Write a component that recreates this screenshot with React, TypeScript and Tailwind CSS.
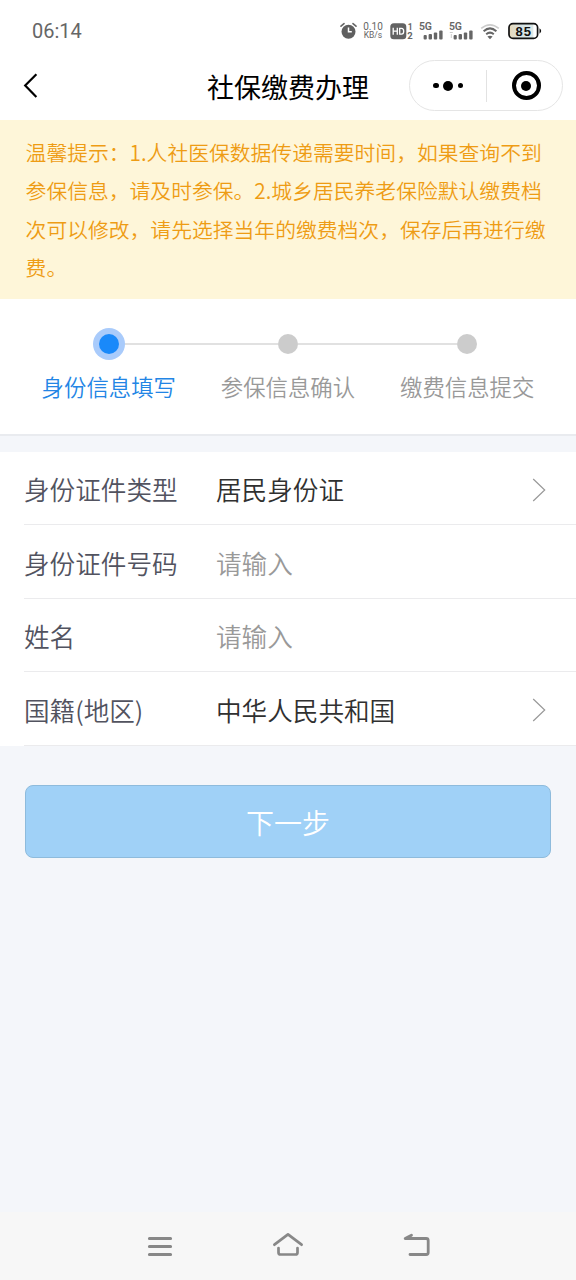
import React from "react";

const NOTICE = [
  "温馨提示：1.人社医保数据传递需要时间，如果查询不到",
  "参保信息，请及时参保。2.城乡居民养老保险默认缴费档",
  "次可以修改，请先选择当年的缴费档次，保存后再进行缴",
  "费。",
];

const STEPS = ["身份信息填写", "参保信息确认", "缴费信息提交"];

type Field = { label: string; value?: string; select?: boolean };

const FIELDS: Field[] = [
  { label: "身份证件类型", value: "居民身份证", select: true },
  { label: "身份证件号码" },
  { label: "姓名" },
  { label: "国籍(地区)", value: "中华人民共和国", select: true },
];

function Signal({ weak }: { weak?: boolean }) {
  return (
    <svg width="25" height="20" viewBox="0 0 25 20" fill="#666" className="shrink-0">
      <text x="0" y="9.2" fontSize="10.5" fontWeight="600" fontFamily="Roboto, sans-serif" textLength="13">5G</text>
      {weak && <path d="M0.8 11h3v1h-3zM1.8 13h1v4h-1z" fill="#ccc" />}
      <rect x="4.6" y="14" width="3.2" height="4.6" rx="1" />
      <rect x="9.6" y="13" width="3.4" height="5.6" rx="1" />
      <rect x="14.8" y="11.5" width="3.4" height="7.1" rx="1" />
      <rect x="20.2" y="9.5" width="3.4" height="9.1" rx="1" />
    </svg>
  );
}

function StatusBar() {
  return (
    <div className="flex h-[60px] items-center justify-between pr-[33.5px] pl-[32px] pt-[2px] font-normal text-[#666]">
      <span className="font-[Roboto,sans-serif] text-[20px] leading-none">06:14</span>
      <div className="flex items-center">
        <svg width="17" height="18" viewBox="0 0 17 18" className="mr-[6px]">
          <circle cx="8.5" cy="9.8" r="7" fill="#5f5f5f" />
          <path d="M1 4.2 4 1.6M16 4.2 13 1.6" stroke="#666" strokeWidth="1.6" strokeLinecap="round" />
          <path d="M8.5 5.5v4.3h3.3" stroke="#fff" strokeWidth="1.5" fill="none" />
        </svg>
        <div className="mr-[6px] flex w-[21px] flex-col items-center font-[Roboto,sans-serif] whitespace-nowrap">
          <span className="text-[10px] leading-[9px]">0.10</span>
          <span className="text-[8.5px] leading-[9px]">KB/s</span>
        </div>
        <svg width="24" height="18" viewBox="0 0 24 18" fill="#666" className="mr-[5px]">
          <rect x="0.3" y="1.3" width="16" height="16" rx="3.5" fill="#626262" />
          <path d="M3.2 5.8v7M7.3 5.8v7M3.2 9.2h4.1M9.7 6.4h1.8q2.2 0 2.2 2.9t-2.2 2.9H9.7z" fill="none" stroke="#fff" strokeWidth="1.3" />
          <text x="17.8" y="8" fontSize="8.5" fontWeight="700" fontFamily="Roboto, sans-serif">1</text>
          <text x="17.2" y="17" fontSize="9.5" fontWeight="700" fontFamily="Roboto, sans-serif">2</text>
        </svg>
        <Signal />
        <span className="w-[5px]" />
        <Signal weak />
        <svg width="20" height="18" viewBox="0 0 20 18" fill="none" strokeWidth="2" className="ml-[6px]">
          <path d="M1.2 6.4Q10 -0.8 18.8 6.4" stroke="#ccc" strokeWidth="1.6" />
          <path d="M3.6 9.2Q10 3.6 16.4 9.2" stroke="#666" />
          <path d="M6.2 12.2Q10 9 13.8 12.2" stroke="#666" />
          <path d="M7.4 14.4Q10 13 12.6 14.4L10 17.2z" fill="#666" />
        </svg>
        <svg width="35" height="18" viewBox="0 0 35 18" className="ml-[8px]">
          <defs>
            <linearGradient id="charge">
              <stop offset="0" stopColor="#e8d9b8" />
              <stop offset="0.45" stopColor="#d5e3e6" />
              <stop offset="0.85" stopColor="#dde9e8" />
              <stop offset="0.86" stopColor="#fff" />
            </linearGradient>
          </defs>
          <rect x="1" y="1.6" width="28.6" height="14.8" rx="4" fill="url(#charge)" stroke="#111" strokeWidth="1.7" />
          <path d="M31.5 6.3q3.4 2.7 0 5.4z" fill="#111" />
          <text x="15.2" y="13.7" textAnchor="middle" fontSize="13" fontWeight="700" fill="#111" fontFamily="Liberation Sans, sans-serif" textLength="15.5">85</text>
        </svg>
      </div>
    </div>
  );
}

function NavBar() {
  return (
    <div className="grid h-[60px] grid-cols-[1fr_auto_1fr] items-center pr-[13px] pl-[23px]">
      <svg width="16" height="26" viewBox="0 0 16 26" fill="none" stroke="#000" strokeWidth="2.2" className="-mt-[8px]">
        <path d="M13.4 1.3 2.2 12.5l11.2 11.4" />
      </svg>
      <h1 className="-mt-[7px] -ml-[10px] text-[27px] leading-[36px] font-normal text-black">社保缴费办理</h1>
      <div className="-mt-[9px] flex h-[51px] w-[154px] items-center justify-self-end rounded-full border border-[#e5e5e5]">
        <div className="flex w-[76px] items-center justify-center gap-[4.5px]">
          <i className="size-[5.5px] rounded-full bg-black" />
          <i className="size-[10px] rounded-full bg-black" />
          <i className="size-[5.5px] rounded-full bg-black" />
        </div>
        <div className="h-[32px] w-px bg-[#e2e2e2]" />
        <div className="flex flex-1 justify-center pl-[3px]">
          <div className="flex size-[29px] items-center justify-center rounded-full border-[4px] border-black">
            <i className="size-[10px] rounded-full bg-black" />
          </div>
        </div>
      </div>
    </div>
  );
}

function Stepper() {
  return (
    <div className="h-[137px] border-b-2 border-[#e9ebef] bg-white px-[19.2px] pt-[29px]">
      <div className="flex h-[32px] items-center pl-[73.6px]">
        <i className="flex size-[32px] items-center justify-center rounded-full bg-[#a9cbfb]">
          <i className="size-[20px] rounded-full bg-[#1989fa]" />
        </i>
        <div className="h-[2px] w-[153.2px] bg-[#e1e1e1]" />
        <i className="size-[20px] rounded-full bg-[#ccc]" />
        <div className="h-[2px] w-[159px] bg-[#e1e1e1]" />
        <i className="size-[20px] rounded-full bg-[#ccc]" />
      </div>
      <div className="mt-[10px] grid grid-cols-3 text-center text-[22.4px] leading-[32px] text-[#999]">
        {STEPS.map((s, i) => (
          <span key={s} className={i === 0 ? "text-[#2385e5]" : ""}>{s}</span>
        ))}
      </div>
    </div>
  );
}

function FieldRow({ label, value, select }: Field) {
  return (
    <div className="ml-[24px] flex h-[73.5px] items-center border-b border-[#ebebed] pr-[30px] pt-[3px] text-[25.6px] leading-[38px]">
      <span className="w-[192px] text-[#52535f]">{label}</span>
      <span className={value ? "flex-1 text-[#303030]" : "flex-1 text-[#999]"}>{value ?? "请输入"}</span>
      {select && (
        <svg width="14" height="24" viewBox="0 0 14 24" fill="none" stroke="#999" strokeWidth="1.2" className="mt-[1px]">
          <path d="M1.2 1 12.7 12 1.2 23" />
        </svg>
      )}
    </div>
  );
}

function SystemNav() {
  return (
    <div className="flex h-[68px] items-center justify-center gap-[98px] bg-[#f7f7f7]">
      <svg width="30" height="28" viewBox="0 0 30 28" fill="none" stroke="#888" strokeWidth="3" strokeLinecap="round">
        <path d="M5.4 6.4h21.2M5.4 14.4h21.2M5.4 22.4h21.2" />
      </svg>
      <svg width="32" height="28" viewBox="0 0 32 28" fill="none" stroke="#888" strokeWidth="2.7" strokeLinecap="round" strokeLinejoin="round">
        <path d="M2.4 12.7 16 2.4l13.6 10.3M6.5 16v4.5q0 2 2 2h15q2 0 2-2V16" />
      </svg>
      <svg width="30" height="28" viewBox="0 0 30 28" fill="none" stroke="#888" strokeWidth="2.8" strokeLinecap="round" strokeLinejoin="round">
        <path d="M9.5 3.2 3.2 6.5h21q2 0 2 2v12q0 2-2 2H8" />
      </svg>
    </div>
  );
}

export default function App() {
  return (
    <div className="flex h-[1280px] w-[576px] flex-col overflow-hidden bg-[#f4f6fa] font-['Noto_Sans_CJK_SC',sans-serif] font-[350]">
      <header className="bg-white">
        <StatusBar />
        <NavBar />
      </header>
      <div className="h-[179px] bg-[#fef6d9] pt-[13px] pl-[25.6px] text-[20.8px] leading-[38.4px] whitespace-nowrap text-[#ee9c14]">
        {NOTICE.map((line) => (
          <p key={line}>{line}</p>
        ))}
      </div>
      <Stepper />
      <div className="mt-[15.5px] bg-white">
        {FIELDS.map((f) => (
          <FieldRow key={f.label} {...f} />
        ))}
      </div>
      <button className="mx-[25px] mt-[39px] h-[73.5px] rounded-[8px] border border-[#8ebbdc] bg-[#a0d1f7] pt-[1px] text-[28px] text-white">
        下一步
      </button>
      <div className="flex-1" />
      <SystemNav />
    </div>
  );
}
